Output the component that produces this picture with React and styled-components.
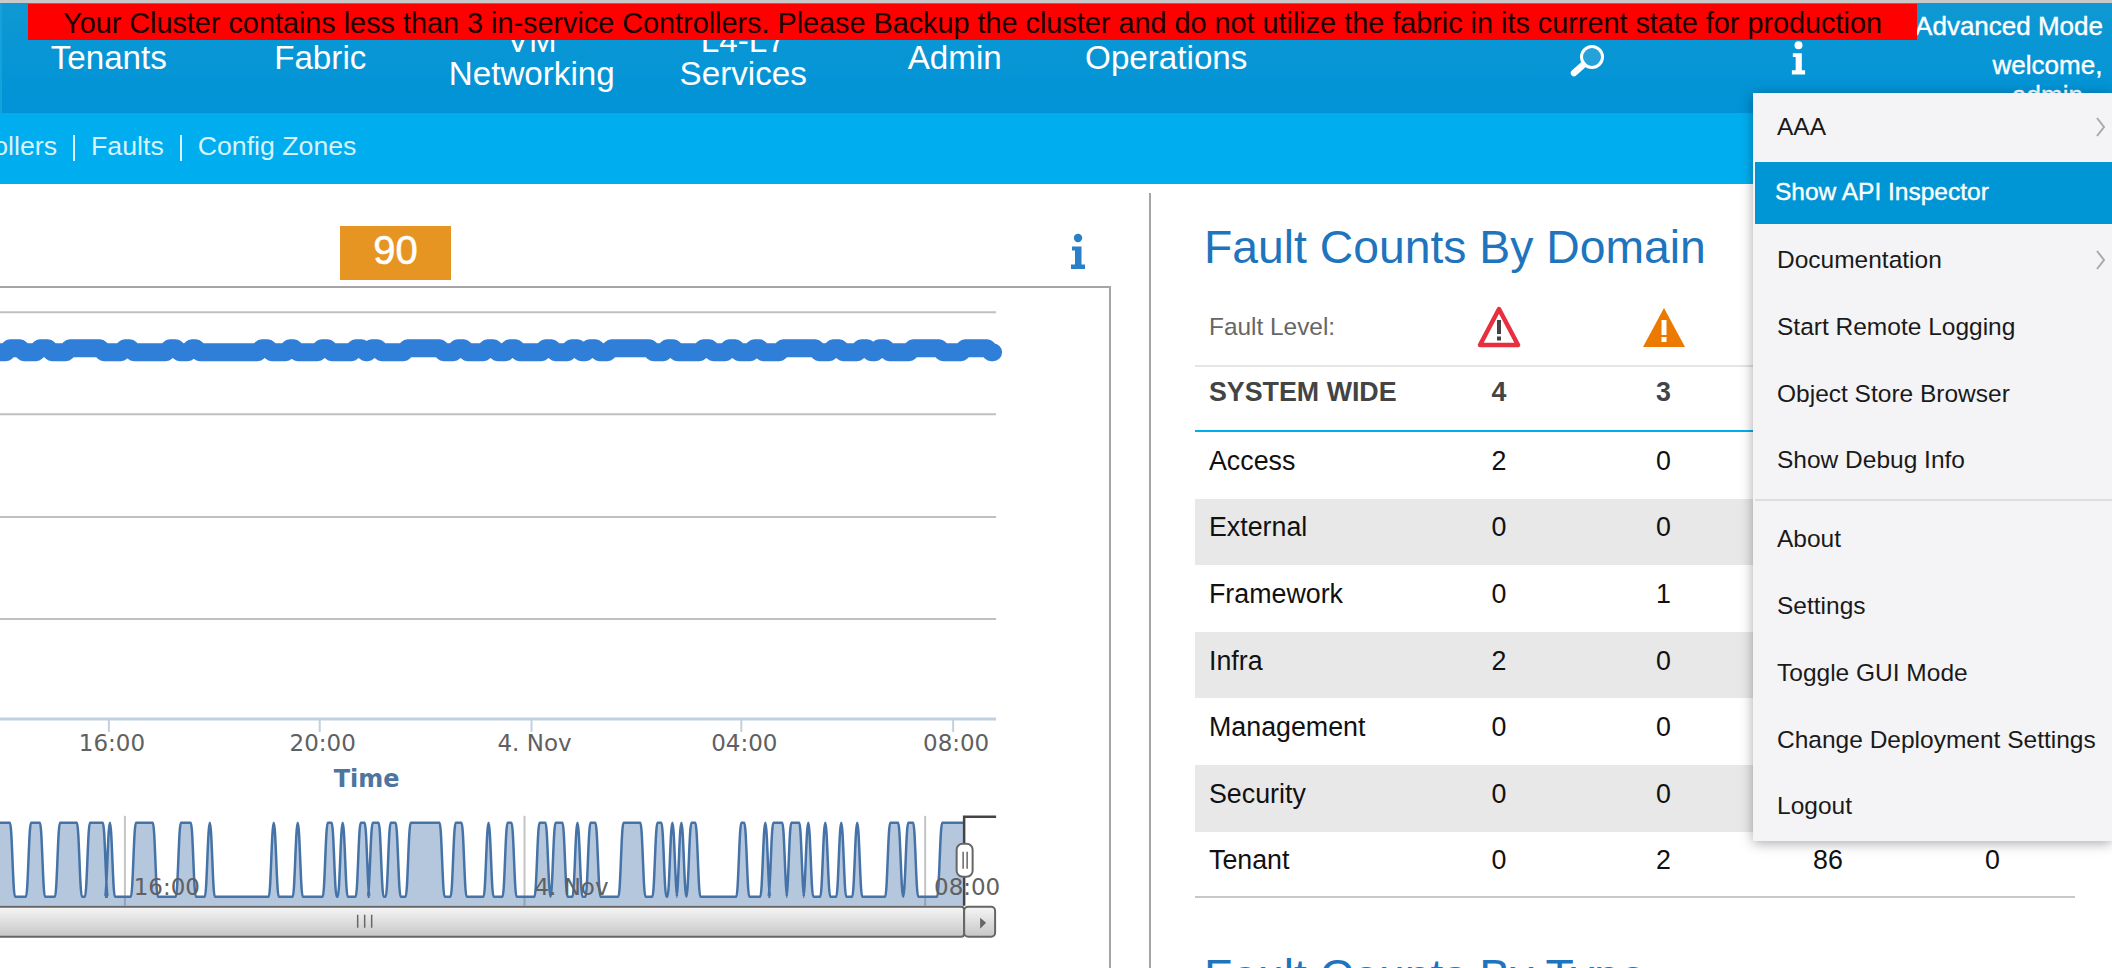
import styled, { createGlobalStyle } from "styled-components";

const GlobalStyle = createGlobalStyle`
  html, body {
    margin: 0;
    padding: 0;
    overflow: hidden;
    background: #fff;
    font-family: "Liberation Sans", Arial, sans-serif;
  }
`;

const navItems = [
  ["Tenants"],
  ["Fabric"],
  ["VM", "Networking"],
  ["L4-L7", "Services"],
  ["Admin"],
  ["Operations"],
];

const faultRows = [
  ["Access", 2, 0],
  ["External", 0, 0],
  ["Framework", 0, 1],
  ["Infra", 2, 0],
  ["Management", 0, 0],
  ["Security", 0, 0],
  ["Tenant", 0, 2, 86, 0],
];

// top edge of the pulses in the navigator, read off the reference
const navPulses = [
  [-6, 10], [31, 40], [60, 77], [90, 103], [110, 110], [136, 153], [181, 191], [210, 210],
  [274, 274], [298, 298], [328, 332], [343, 343], [361, 365], [373, 379], [391, 396],
  [411, 440], [456, 462], [489, 489], [508, 512], [540, 546], [556, 563], [578, 578],
  [591, 596], [624, 641], [658, 662], [673, 673], [682, 682], [692, 696], [742, 745],
  [766, 766], [774, 783], [792, 800], [809, 809], [826, 826], [842, 842], [858, 858],
  [891, 899], [909, 914], [943, 970],
];

// where the thick series line steps up
const seriesBumps = [
  [10, 20], [40, 48], [70, 100], [125, 130], [170, 176], [192, 196], [262, 268], [290, 294],
  [322, 328], [356, 362], [372, 378], [408, 440], [458, 464], [488, 494], [510, 516],
  [546, 552], [572, 578], [590, 596], [612, 650], [668, 674], [704, 710], [730, 736],
  [755, 760], [784, 816], [834, 840], [862, 868], [880, 886], [914, 940], [966, 988],
];

const navigatorPath = () => {
  const low = 896;
  const high = 822;
  let d = `M-10 ${low}`;
  navPulses.forEach(([a, b]) => {
    d += ` L${a - 5} ${low} C${a - 3} ${low} ${a - 2} ${high} ${a} ${high}`;
    if (b > a) d += ` L${b} ${high}`;
    d += ` C${b + 2} ${high} ${b + 3} ${low} ${b + 5} ${low}`;
  });
  return d;
};

const seriesPath = () => {
  let d = "M-10 351";
  seriesBumps.forEach(([a, b]) => {
    d += ` L${a - 4} 351 L${a} 347 L${b} 347 L${b + 4} 351`;
  });
  return `${d} L994 351`;
};

const InfoGlyph = ({ className }) => (
  <svg className={className} viewBox="0 0 18 36">
    <circle cx="9" cy="4.5" r="4.2" fill="currentColor" />
    <path d="M3 13H12.5V31H16V35.5H2V31H6V17H3Z" fill="currentColor" />
  </svg>
);

const SearchGlyph = () => (
  <SearchSvg viewBox="0 0 36 33">
    <circle cx="23" cy="13" r="10.5" fill="rgba(255,255,255,.12)" stroke="#fff" strokeWidth="3" />
    <line x1="14" y1="21" x2="5" y2="29" stroke="#fff" strokeWidth="6.5" strokeLinecap="round" />
  </SearchSvg>
);

const Chevron = () => (
  <ChevronSvg viewBox="0 0 11 20">
    <polyline points="2,1 9,10 2,19" fill="none" stroke="#a9a9ad" strokeWidth="2" />
  </ChevronSvg>
);

const CriticalIcon = () => (
  <FaultIcon viewBox="0 0 44 42">
    <path d="M22 3L41 39H3Z" fill="#fff" stroke="#e7303f" strokeWidth="4.5" strokeLinejoin="round" />
    <rect x="20" y="14" width="4" height="14" fill="#444" />
    <rect x="20" y="30.5" width="4" height="4" fill="#444" />
  </FaultIcon>
);

const MajorIcon = () => (
  <FaultIcon viewBox="0 0 44 42">
    <path d="M22 2L43 41H1Z" fill="#ec7a00" />
    <rect x="19.5" y="14" width="5" height="15" fill="#fff" />
    <rect x="19.5" y="31" width="5" height="5" fill="#fff" />
  </FaultIcon>
);

const TrendChart = () => (
  <ChartSvg viewBox="0 287 1110 680">
    <defs>
      <linearGradient id="scrollFill" x1="0" y1="0" x2="0" y2="1">
        <stop offset="0" stopColor="#f6f6f6" />
        <stop offset="1" stopColor="#c6c6c6" />
      </linearGradient>
    </defs>

    {[311, 413, 516, 618].map((y) => (
      <line key={y} x1="0" x2="997" y1={y} y2={y} stroke="#c0c0c0" strokeWidth="2" />
    ))}
    <path d={seriesPath()} fill="none" stroke="#2f7ed8" strokeWidth="18" strokeLinejoin="round" strokeLinecap="round" />

    <line x1="0" x2="997" y1="718" y2="718" stroke="#c0d0e0" strokeWidth="3" />
    {[
      [109, "16:00"],
      [320, "20:00"],
      [532, "4. Nov"],
      [742, "04:00"],
      [954, "08:00"],
    ].map(([x, label]) => (
      <g key={label}>
        <line x1={x} x2={x} y1="718" y2="731" stroke="#c0d0e0" strokeWidth="2" />
        <AxisLabel x={x + 3} y="750" textAnchor="middle">{label}</AxisLabel>
      </g>
    ))}
    <AxisTitle x="367" y="786" textAnchor="middle">Time</AxisTitle>

    {[125, 525, 926].map((x) => (
      <line key={x} x1={x} x2={x} y1="815" y2="905" stroke="#c4c4c4" strokeWidth="2" />
    ))}
    <clipPath id="navClip">
      <rect x="0" y="810" width="965" height="96" />
    </clipPath>
    <g clipPath="url(#navClip)">
      <path d={`${navigatorPath()} L975 896 L975 905 L-10 905 Z`} fill="#4572a7" fillOpacity="0.4" />
      <path d={navigatorPath()} fill="none" stroke="#4572a7" strokeWidth="2.5" />
    </g>
    <AxisLabel x="167" y="894" textAnchor="middle">16:00</AxisLabel>
    <AxisLabel x="572" y="894" textAnchor="middle">4. Nov</AxisLabel>
    <AxisLabel x="968" y="894" textAnchor="middle">08:00</AxisLabel>

    <path d="M997 816H965V905" fill="none" stroke="#444" strokeWidth="2.5" />
    <rect x="957.5" y="843" width="16" height="33" rx="6" fill="#fff" stroke="#666" strokeWidth="2" />
    <line x1="964" x2="964" y1="851" y2="868" stroke="#666" strokeWidth="1.5" />
    <line x1="968" x2="968" y1="851" y2="868" stroke="#666" strokeWidth="1.5" />

    <rect x="-10" y="906" width="975" height="30" rx="3" fill="url(#scrollFill)" stroke="#666" strokeWidth="2" />
    {[358, 365, 372].map((x) => (
      <line key={x} x1={x} x2={x} y1="914" y2="927" stroke="#666" strokeWidth="1.5" />
    ))}
    <rect x="965" y="906" width="31" height="30" rx="4" fill="url(#scrollFill)" stroke="#666" strokeWidth="2" />
    <polygon points="981,917 987,922 981,928" fill="#666" />
  </ChartSvg>
);

export default function App() {
  return (
    <Page>
      <GlobalStyle />
      <Banner>
        Your Cluster contains less than 3 in-service Controllers. Please Backup the cluster and do
        not utilize the fabric in its current state for production
      </Banner>

      <Header>
        <NavList>
          {navItems.map((lines) => (
            <NavItem key={lines.join(" ")}>
              {lines.map((line) => (
                <div key={line}>{line}</div>
              ))}
            </NavItem>
          ))}
        </NavList>
        <SearchButton>
          <SearchGlyph />
        </SearchButton>
        <HeaderInfo />
        <UserBlock>
          <ModeLabel>Advanced Mode</ModeLabel>
          <Welcome>
            <div>welcome,</div>
            <div>admin</div>
          </Welcome>
        </UserBlock>
      </Header>

      <SubNav>
        <SubLink>Controllers</SubLink>
        <SubSep />
        <SubLink>Faults</SubLink>
        <SubSep />
        <SubLink>Config Zones</SubLink>
      </SubNav>

      <Main>
        <ChartPane>
          <ChartTop>
            <ScoreBadge>90</ScoreBadge>
            <PaneInfo />
          </ChartTop>
          <ChartBox>
            <TrendChart />
          </ChartBox>
        </ChartPane>

        <FaultPane>
          <PaneTitle>Fault Counts By Domain</PaneTitle>
          <FaultTable>
            <HeadRow>
              <LevelLabel>Fault Level:</LevelLabel>
              <Cell><CriticalIcon /></Cell>
              <Cell><MajorIcon /></Cell>
            </HeadRow>
            <TotalRow>
              <RowLabel>SYSTEM WIDE</RowLabel>
              <Cell>4</Cell>
              <Cell>3</Cell>
            </TotalRow>
            {faultRows.map(([name, ...counts], i) => (
              <FaultRow key={name} $shaded={i % 2 === 1} $last={i === faultRows.length - 1}>
                <RowLabel>{name}</RowLabel>
                {counts.map((count, c) => (
                  <Cell key={c}>{count}</Cell>
                ))}
              </FaultRow>
            ))}
          </FaultTable>
          <NextTitle>Fault Counts By Type</NextTitle>
        </FaultPane>
      </Main>

      <HelpMenu>
        <MenuItem>AAA<Chevron /></MenuItem>
        <MenuItem $active>Show API Inspector</MenuItem>
        <MenuItem>Documentation<Chevron /></MenuItem>
        <MenuItem>Start Remote Logging</MenuItem>
        <MenuItem>Object Store Browser</MenuItem>
        <MenuItem>Show Debug Info</MenuItem>
        <MenuDivider />
        <MenuItem>About</MenuItem>
        <MenuItem>Settings</MenuItem>
        <MenuItem>Toggle GUI Mode</MenuItem>
        <MenuItem>Change Deployment Settings</MenuItem>
        <MenuItem>Logout</MenuItem>
      </HelpMenu>
    </Page>
  );
}

const Page = styled.div`
  position: relative;
  width: 2112px;
  height: 968px;
  overflow: hidden;
  box-sizing: border-box;
  border-top: 3px solid #c9c9c9;
`;

const Banner = styled.div`
  position: absolute;
  top: 1px;
  left: 28px;
  width: 1889px;
  height: 36px;
  z-index: 5;
  background: #ff0000;
  color: #1a0000;
  font-size: 28.8px;
  line-height: 38px;
  text-align: center;
  white-space: nowrap;
`;

const Header = styled.header`
  display: flex;
  align-items: flex-start;
  height: 110px;
  overflow: hidden;
  box-sizing: border-box;
  border-left: 2px solid #14a2dd;
  background: linear-gradient(#0f98d3, #0093d7);
  color: #fff;
`;

const NavList = styled.nav`
  display: flex;
  flex: none;
  padding-left: 1px;
`;

const NavItem = styled.div`
  display: flex;
  flex-direction: column;
  justify-content: center;
  width: 211.5px;
  height: 108px;
  font-size: 33.2px;
  line-height: 33px;
  text-align: center;
`;

const SearchButton = styled.div`
  flex: none;
  width: 36px;
  height: 33px;
  margin: 41px 0 0 297px;
`;

const SearchSvg = styled.svg`
  display: block;
  width: 36px;
  height: 33px;
`;

const HeaderInfo = styled(InfoGlyph)`
  flex: none;
  width: 17px;
  height: 38px;
  margin: 36px 0 0 185px;
  color: #fff;
`;

const UserBlock = styled.div`
  flex: none;
  width: 200px;
  margin-left: auto;
  padding-right: 9px;
  box-sizing: content-box;
  text-align: right;
  font-size: 26px;
  -webkit-text-stroke: 0.4px #fff;
`;

const ModeLabel = styled.div`
  margin-top: 8px;
  line-height: 30px;
  white-space: nowrap;
`;

const Welcome = styled.div`
  width: 111px;
  margin: 9px 0 0 auto;
  line-height: 30px;
  text-align: center;
`;

const SubNav = styled.div`
  display: flex;
  align-items: center;
  gap: 16px;
  height: 71px;
  margin-left: -72px;
  padding-bottom: 4px;
  box-sizing: border-box;
  background: #00aeef;
  color: #d9f3fd;
  font-size: 26.7px;
`;

const SubLink = styled.span`
  white-space: nowrap;
`;

const SubSep = styled.span`
  width: 2px;
  height: 26px;
  margin-top: 3px;
  background: #d9f3fd;
`;

const Main = styled.main`
  display: flex;
  height: 784px;
`;

const ChartPane = styled.section`
  flex: none;
  width: 1149px;
`;

const ChartTop = styled.div`
  display: flex;
  align-items: flex-start;
  width: 1111px;
  box-sizing: border-box;
  padding: 42px 24px 6px 340px;
`;

const ScoreBadge = styled.div`
  width: 111px;
  height: 54px;
  background: #e69522;
  color: #fff;
  font-size: 40px;
  line-height: 48px;
  text-align: center;
  -webkit-text-stroke: 0.5px #fff;
`;

const PaneInfo = styled(InfoGlyph)`
  width: 18px;
  height: 37px;
  margin: 7px 0 0 auto;
  color: #2a7fc9;
`;

const ChartBox = styled.div`
  width: 1111px;
  height: 682px;
  box-sizing: border-box;
  border-top: 2px solid #a5a5a8;
  border-right: 2px solid #a5a5a8;
`;

const ChartSvg = styled.svg`
  display: block;
  width: 1109px;
  height: 680px;
`;

const AxisLabel = styled.text`
  font-family: "DejaVu Sans", sans-serif;
  font-size: 23px;
  fill: #606060;
`;

const AxisTitle = styled.text`
  font-family: "DejaVu Sans", sans-serif;
  font-size: 24px;
  font-weight: bold;
  fill: #4d759e;
`;

const FaultPane = styled.section`
  flex: 1;
  margin-top: 9px;
  padding-left: 44px;
  border-left: 2px solid #a5a5a8;
`;

const PaneTitle = styled.h2`
  margin: 27px 0 25px;
  padding-left: 9px;
  color: #1e74bd;
  font-size: 46.3px;
  font-weight: normal;
  line-height: 54px;
  white-space: nowrap;
`;

const NextTitle = styled(PaneTitle)`
  margin-top: 51px;
`;

const FaultTable = styled.div`
  width: 880px;
`;

const TableRow = styled.div`
  display: grid;
  grid-template-columns: 221.75px repeat(4, 164.5px);
  align-items: center;
  box-sizing: border-box;
  color: #111;
  font-size: 26.8px;
`;

const HeadRow = styled(TableRow)`
  height: 68px;
  padding-bottom: 11px;
  border-bottom: 2px solid #e5e5e5;
`;

const TotalRow = styled(TableRow)`
  height: 65px;
  padding-bottom: 13px;
  border-bottom: 2px solid #00aeef;
  color: #444;
  font-weight: bold;
`;

const FaultRow = styled(TableRow)`
  height: 66.6px;
  padding-bottom: ${(p) => (p.$last ? "6px" : "8px")};
  background: ${(p) => (p.$shaded ? "#e8e8e8" : "transparent")};
  border-bottom: ${(p) => (p.$last ? "2px solid #c8c8c8" : "none")};
`;

const RowLabel = styled.div`
  padding-left: 14px;
  white-space: nowrap;
`;

const LevelLabel = styled(RowLabel)`
  color: #666;
  font-size: 24.4px;
`;

const Cell = styled.div`
  display: flex;
  justify-content: center;
`;

const FaultIcon = styled.svg`
  display: block;
  width: 44px;
  height: 42px;
`;

const HelpMenu = styled.div`
  position: absolute;
  top: 90px;
  left: 1753px;
  right: 0;
  z-index: 10;
  box-sizing: border-box;
  height: 748px;
  padding-top: 3px;
  background: #f4f4f6;
  box-shadow: 0 2px 12px rgba(0, 0, 0, 0.35);
`;

const MenuItem = styled.div`
  display: flex;
  align-items: center;
  justify-content: space-between;
  height: 62px;
  margin: ${(p) => (p.$active ? "-1px 0 5.7px 2px" : "0 0 4.7px 2px")};
  padding: ${(p) => (p.$active ? "0 6px 2px 20px" : "0 6px 0 22px")};
  box-sizing: border-box;
  background: ${(p) => (p.$active ? "#0096d6" : "transparent")};
  color: ${(p) => (p.$active ? "#fff" : "#1a1a1a")};
  font-size: 24.5px;
  white-space: nowrap;
  -webkit-text-stroke: ${(p) => (p.$active ? "0.4px #fff" : "0")};
`;

const ChevronSvg = styled.svg`
  width: 11px;
  height: 20px;
`;

const MenuDivider = styled.div`
  height: 2px;
  margin: 8px 0 7px 2px;
  background: #dedee0;
`;
